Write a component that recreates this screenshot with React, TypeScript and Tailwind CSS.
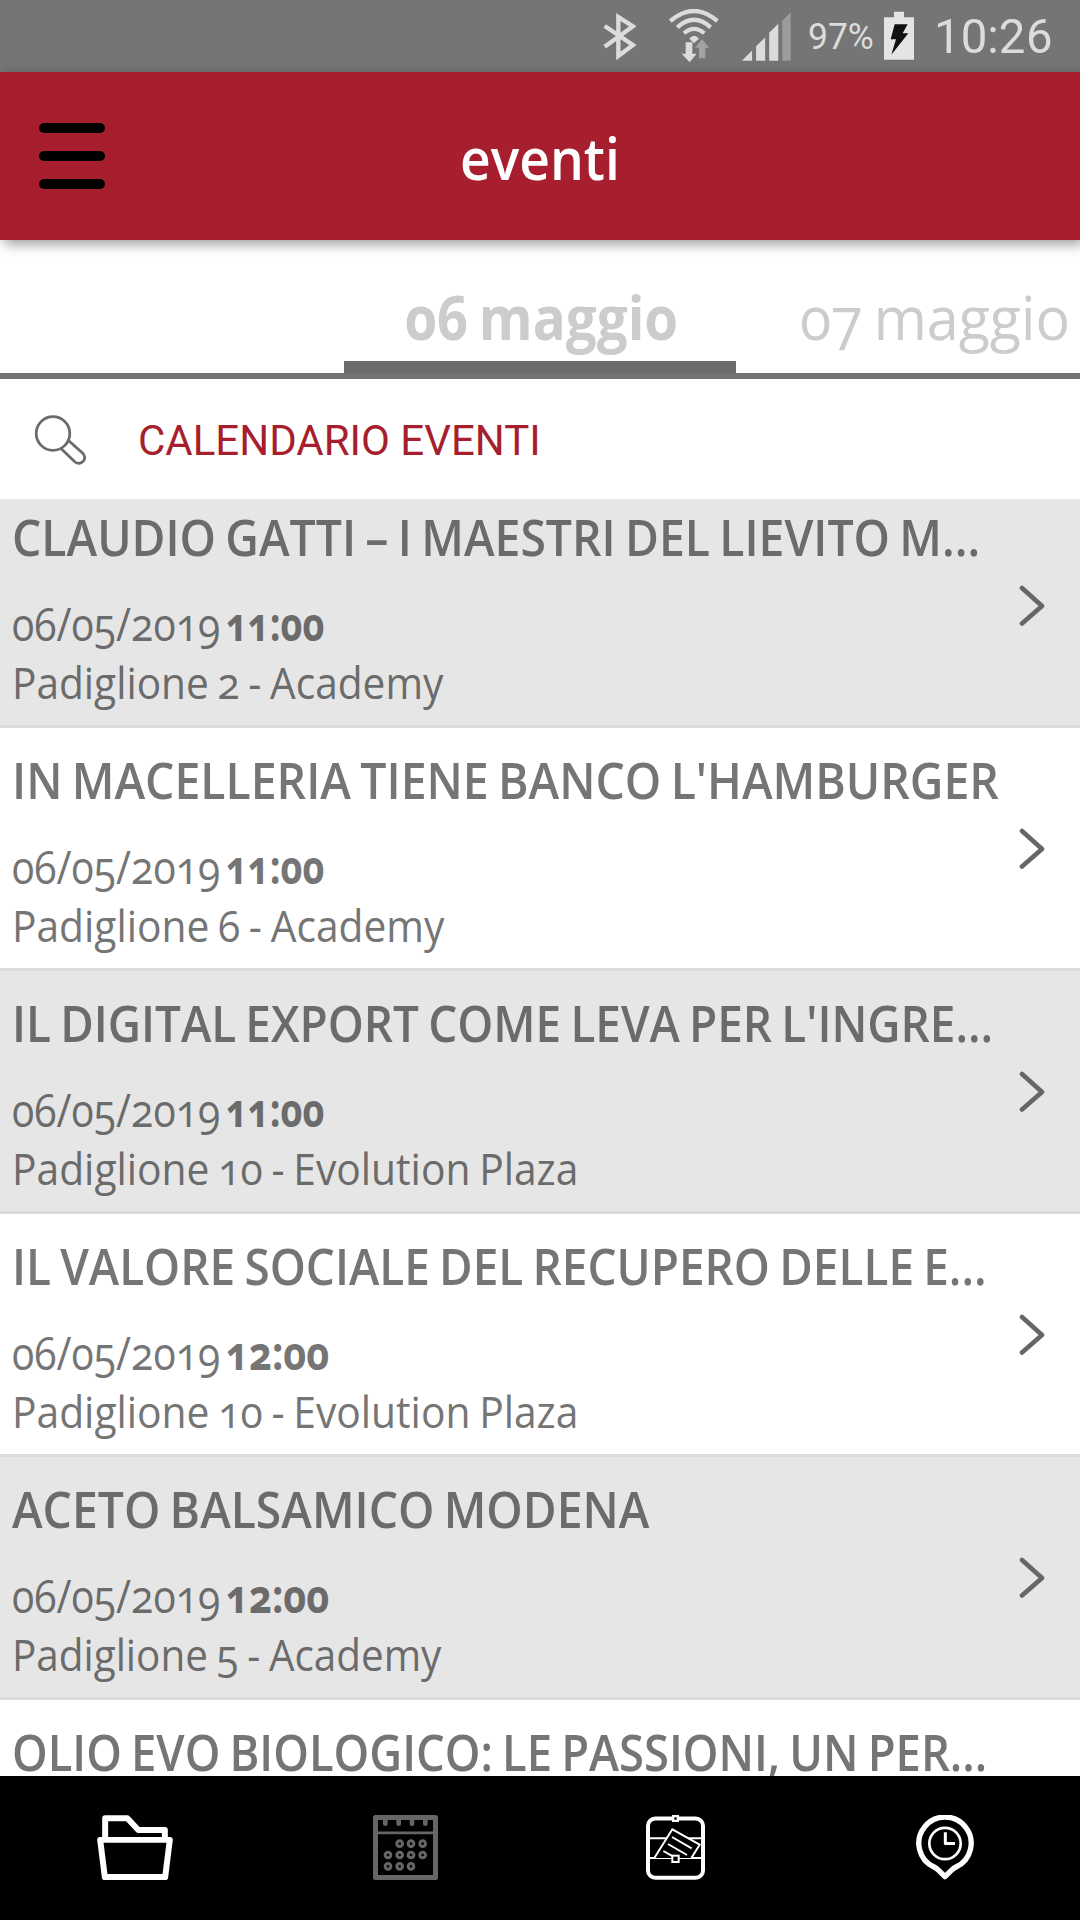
import { useLayoutEffect, useRef, useState } from "react";

type FitProps = { text: string; width: number; className?: string };

// Condenses a line of text horizontally so that it takes exactly `width` pixels.
function Fit({ text, width, className = "" }: FitProps) {
  const ref = useRef<HTMLSpanElement>(null);
  const [scale, setScale] = useState(1);
  useLayoutEffect(() => {
    if (ref.current) setScale(width / ref.current.offsetWidth);
  }, [text, width]);
  return (
    <span className="block whitespace-nowrap" style={{ width }}>
      <span
        ref={ref}
        className={`inline-block origin-left align-top ${className}`}
        style={{ transform: `scaleX(${scale})` }}
      >
        {text}
      </span>
    </span>
  );
}

type EventItem = {
  title: string;
  titleWidth: number;
  time?: string;
  timeWidth?: number;
  place?: string;
  placeWidth?: number;
};

const events: EventItem[] = [
  { title: "CLAUDIO GATTI – I MAESTRI DEL LIEVITO M...", titleWidth: 968, time: "11:00", timeWidth: 98, place: "Padiglione 2 - Academy", placeWidth: 431 },
  { title: "IN MACELLERIA TIENE BANCO L'HAMBURGER", titleWidth: 987, time: "11:00", timeWidth: 98, place: "Padiglione 6 - Academy", placeWidth: 432 },
  { title: "IL DIGITAL EXPORT COME LEVA PER L'INGRE...", titleWidth: 981, time: "11:00", timeWidth: 98, place: "Padiglione 10 - Evolution Plaza", placeWidth: 566 },
  { title: "IL VALORE SOCIALE DEL RECUPERO DELLE E...", titleWidth: 975, time: "12:00", timeWidth: 103, place: "Padiglione 10 - Evolution Plaza", placeWidth: 566 },
  { title: "ACETO BALSAMICO MODENA", titleWidth: 637, time: "12:00", timeWidth: 103, place: "Padiglione 5 - Academy", placeWidth: 429 },
  { title: "OLIO EVO BIOLOGICO: LE PASSIONI, UN PER...", titleWidth: 975 },
];

function StatusBar() {
  return (
    <div className="flex h-[72px] shrink-0 items-start bg-[#757575] pl-[603px] font-['Roboto'] text-[#dcdcdc] lining-nums">
      <svg className="mt-3 h-[49px] w-[33px] shrink-0" viewBox="68 35 99 147" fill="none" stroke="#dcdcdc" strokeWidth="13">
        <path d="M73 77 L158 134 L114 167 V50 L158 78 L73 139" />
      </svg>
      <svg className="mt-[9px] ml-[33px] h-[54px] w-[50px] shrink-0" viewBox="267 27 150 162" fill="none" stroke="#dcdcdc">
        <path d="M271 63 Q342 3 412 63" strokeWidth="13" />
        <path d="M292 82 Q342 37 392 82" strokeWidth="13" />
        <path d="M312 100 Q342 73 373 100" strokeWidth="12" />
        <path d="M328 116 Q342 98 357 116 L342 130Z" fill="#dcdcdc" stroke="none" />
        <path d="M317 127h20v34h13l-21 26-24-26h12Z" fill="#dcdcdc" stroke="none" />
        <path d="M357 175v-32h-12l21-25 22 25h-12v32Z" fill="#a3a3a3" stroke="none" />
      </svg>
      <svg className="mt-3 ml-[23px] h-[49px] w-[49px] shrink-0" viewBox="486 36 146 146" fill="#dcdcdc">
        <path d="M486 181L516 151V181Z M528 181V138L555 112V181Z M567 181V98L594 71V181Z" />
        <path d="M606 181V62L631 37V181Z" fill="#9c9c9c" />
      </svg>
      <div className="mt-[16px] ml-[17px] w-[66px] text-[36px] leading-[42px]">
        <Fit text="97%" width={66} />
      </div>
      <svg className="mt-[11px] ml-[10px] h-[49px] w-[30px] shrink-0" viewBox="912 32 90 147">
        <path d="M912 51H942V34H972V51H1002V178H912Z" fill="#e4e4e4" />
        <path d="M944 72H983L968 99H985L934 163L948 117H932Z" fill="#111" />
      </svg>
      <div className="mt-[7px] ml-[20px] text-[49px] leading-[60px]">
        <Fit text="10:26" width={119} />
      </div>
    </div>
  );
}

function Header() {
  return (
    <header className="relative z-10 flex h-[168px] shrink-0 items-start bg-[#a71e2e] shadow-[4px_4px_12px_rgba(0,0,0,0.4)]">
      <div className="mt-[51px] ml-[39px] flex w-[66px] flex-col gap-[18px]">
        <div className="h-[10px] rounded-full bg-black" />
        <div className="h-[10px] rounded-full bg-black" />
        <div className="h-[10px] rounded-full bg-black" />
      </div>
      <div className="mt-[46px] ml-[355px] text-[58px] leading-[80px] font-semibold text-white">
        <Fit text="eventi" width={160} />
      </div>
    </header>
  );
}

function Tabs() {
  return (
    <div className="flex h-[139px] shrink-0 border-b-[6px] border-[#737374] pl-[344px] text-[61px] leading-[80px] text-[#ccc]">
      <div className="flex h-[133px] w-[392px] justify-center border-b-[12px] border-[#6b6b6b] pt-[37px] pl-[2px] font-bold">
        <Fit text="06 maggio" width={273} className="[word-spacing:-4px]" />
      </div>
      <div className="ml-[64px] pt-[37px]">
        <Fit text="07 maggio" width={270} className="[word-spacing:-4px]" />
      </div>
    </div>
  );
}

function SearchBar() {
  return (
    <div className="flex h-[120px] shrink-0 items-start bg-white">
      <svg className="mt-9 ml-[34px] h-[50px] w-[53px]" viewBox="0 0 53 50" fill="none" stroke="#6b6b6b" strokeWidth="2.8">
        <circle cx="19" cy="18.5" r="16.8" />
        <path d="M27.5 34L41 47Q45 50 49 46.500Q52.500 43 49 38.500L34.500 25.500" />
      </svg>
      <div className="mt-[38px] ml-[51px] font-['Roboto'] text-[42px] leading-[48px] text-[#a71e2e]">
        <Fit text="CALENDARIO EVENTI" width={403} />
      </div>
    </div>
  );
}

function EventRow({ item }: { item: EventItem }) {
  return (
    <div className="flex h-[243px] shrink-0 justify-between border-b-[3px] border-[#dcdcdc] bg-white pr-[35px] pl-[12px] text-[#757575] odd:bg-[#e6e6e6] odd:text-[#6b6b6b]">
      <div className="pt-[21px]">
        <div className="text-[51px] leading-[60px] font-semibold [word-spacing:-3px]">
          <Fit text={item.title} width={item.titleWidth} />
        </div>
        {item.time && item.place && (
          <>
            <div className="mt-[28px] flex gap-[6px] text-[46px] leading-[59px]">
              <Fit text="06/05/2019" width={208} />
              <Fit text={item.time} width={item.timeWidth ?? 98} className="font-bold" />
            </div>
            <div className="text-[44px] leading-[59px] [word-spacing:-2px]">
              <Fit text={item.place} width={item.placeWidth ?? 431} />
            </div>
          </>
        )}
      </div>
      {item.time && (
        <svg className="mt-[100px] h-[42px] w-[26px] shrink-0" viewBox="0 0 26 42" fill="none" stroke="#666" strokeWidth="4.600" strokeLinecap="round" strokeLinejoin="round">
          <path d="M3 3L23 21L3 38.500" />
        </svg>
      )}
    </div>
  );
}

function FolderIcon() {
  return (
    <svg className="h-[65px] w-[76px]" viewBox="81 134 228 196" fill="none" stroke="#fff" strokeWidth="18" strokeLinejoin="round">
      <path d="M105 204V144H172L205 179H285V204" />
      <path d="M90 209H300L286 321H104Z" />
    </svg>
  );
}

function CalendarIcon() {
  const dots = [
    [989, 221], [1023, 221], [1058, 221],
    [954, 255], [989, 255], [1023, 255], [1058, 255],
    [954, 289], [989, 289], [1023, 289],
  ];
  return (
    <svg className="size-[65px]" viewBox="909 135 195 195" fill="none" stroke="#666" strokeLinejoin="round">
      <rect x="916.500" y="142.500" width="180" height="180" strokeWidth="15" />
      <path d="M920 188.500H1094" strokeWidth="8" />
      <path d="M946 146V161M986 146V161M1026 146V161M1066 146V161" strokeWidth="14" strokeLinecap="round" />
      {dots.map(([x, y]) => (
        <circle key={`${x}-${y}`} cx={x} cy={y} r="8.500" strokeWidth="9" />
      ))}
    </svg>
  );
}

function TicketIcon() {
  return (
    <svg className="h-[65px] w-[59px]" viewBox="78 135 177 195" fill="none" stroke="#fff">
      <rect x="84" y="145.500" width="165" height="178" rx="22" strokeWidth="12" />
      <path d="M88 205H140M205 205H246M88 264H246" strokeWidth="6" />
      <path d="M103 264L157 178L239 224L214 264" fill="#000" strokeWidth="6" />
      <path d="M156 201L215 235M144 222L201 255M130 243L160 260" strokeWidth="6" />
      <rect x="159.500" y="138.500" width="14" height="14" fill="#000" strokeWidth="7" />
      <rect x="157" y="257" width="19" height="19" fill="#000" strokeWidth="6" />
    </svg>
  );
}

function ClockPinIcon() {
  return (
    <svg className="h-[65px] w-[58px]" viewBox="888 135 174 195" fill="none" stroke="#fff" strokeLinejoin="round">
      <path d="M975 320L956 301Q950 295 942 291A78.500 78.500 0 1 1 1008 291Q1000 295 994 301Z" strokeWidth="16" />
      <circle cx="975" cy="220.500" r="47" strokeWidth="8" />
      <path d="M976 187V220.500H1005" strokeWidth="9" />
    </svg>
  );
}

export default function App() {
  return (
    <div className="flex h-[1920px] w-[1080px] flex-col overflow-hidden bg-white font-['Open_Sans','Noto_Sans',sans-serif] oldstyle-nums">
      <StatusBar />
      <Header />
      <Tabs />
      <SearchBar />
      <main className="min-h-0 flex-1 overflow-hidden">
        <div className="-mt-[14px] flex flex-col">
          {events.map((item) => (
            <EventRow key={item.title} item={item} />
          ))}
        </div>
      </main>
      <nav className="grid h-[144px] shrink-0 grid-cols-4 place-items-center bg-black pb-px">
        <FolderIcon />
        <CalendarIcon />
        <TicketIcon />
        <ClockPinIcon />
      </nav>
    </div>
  );
}
